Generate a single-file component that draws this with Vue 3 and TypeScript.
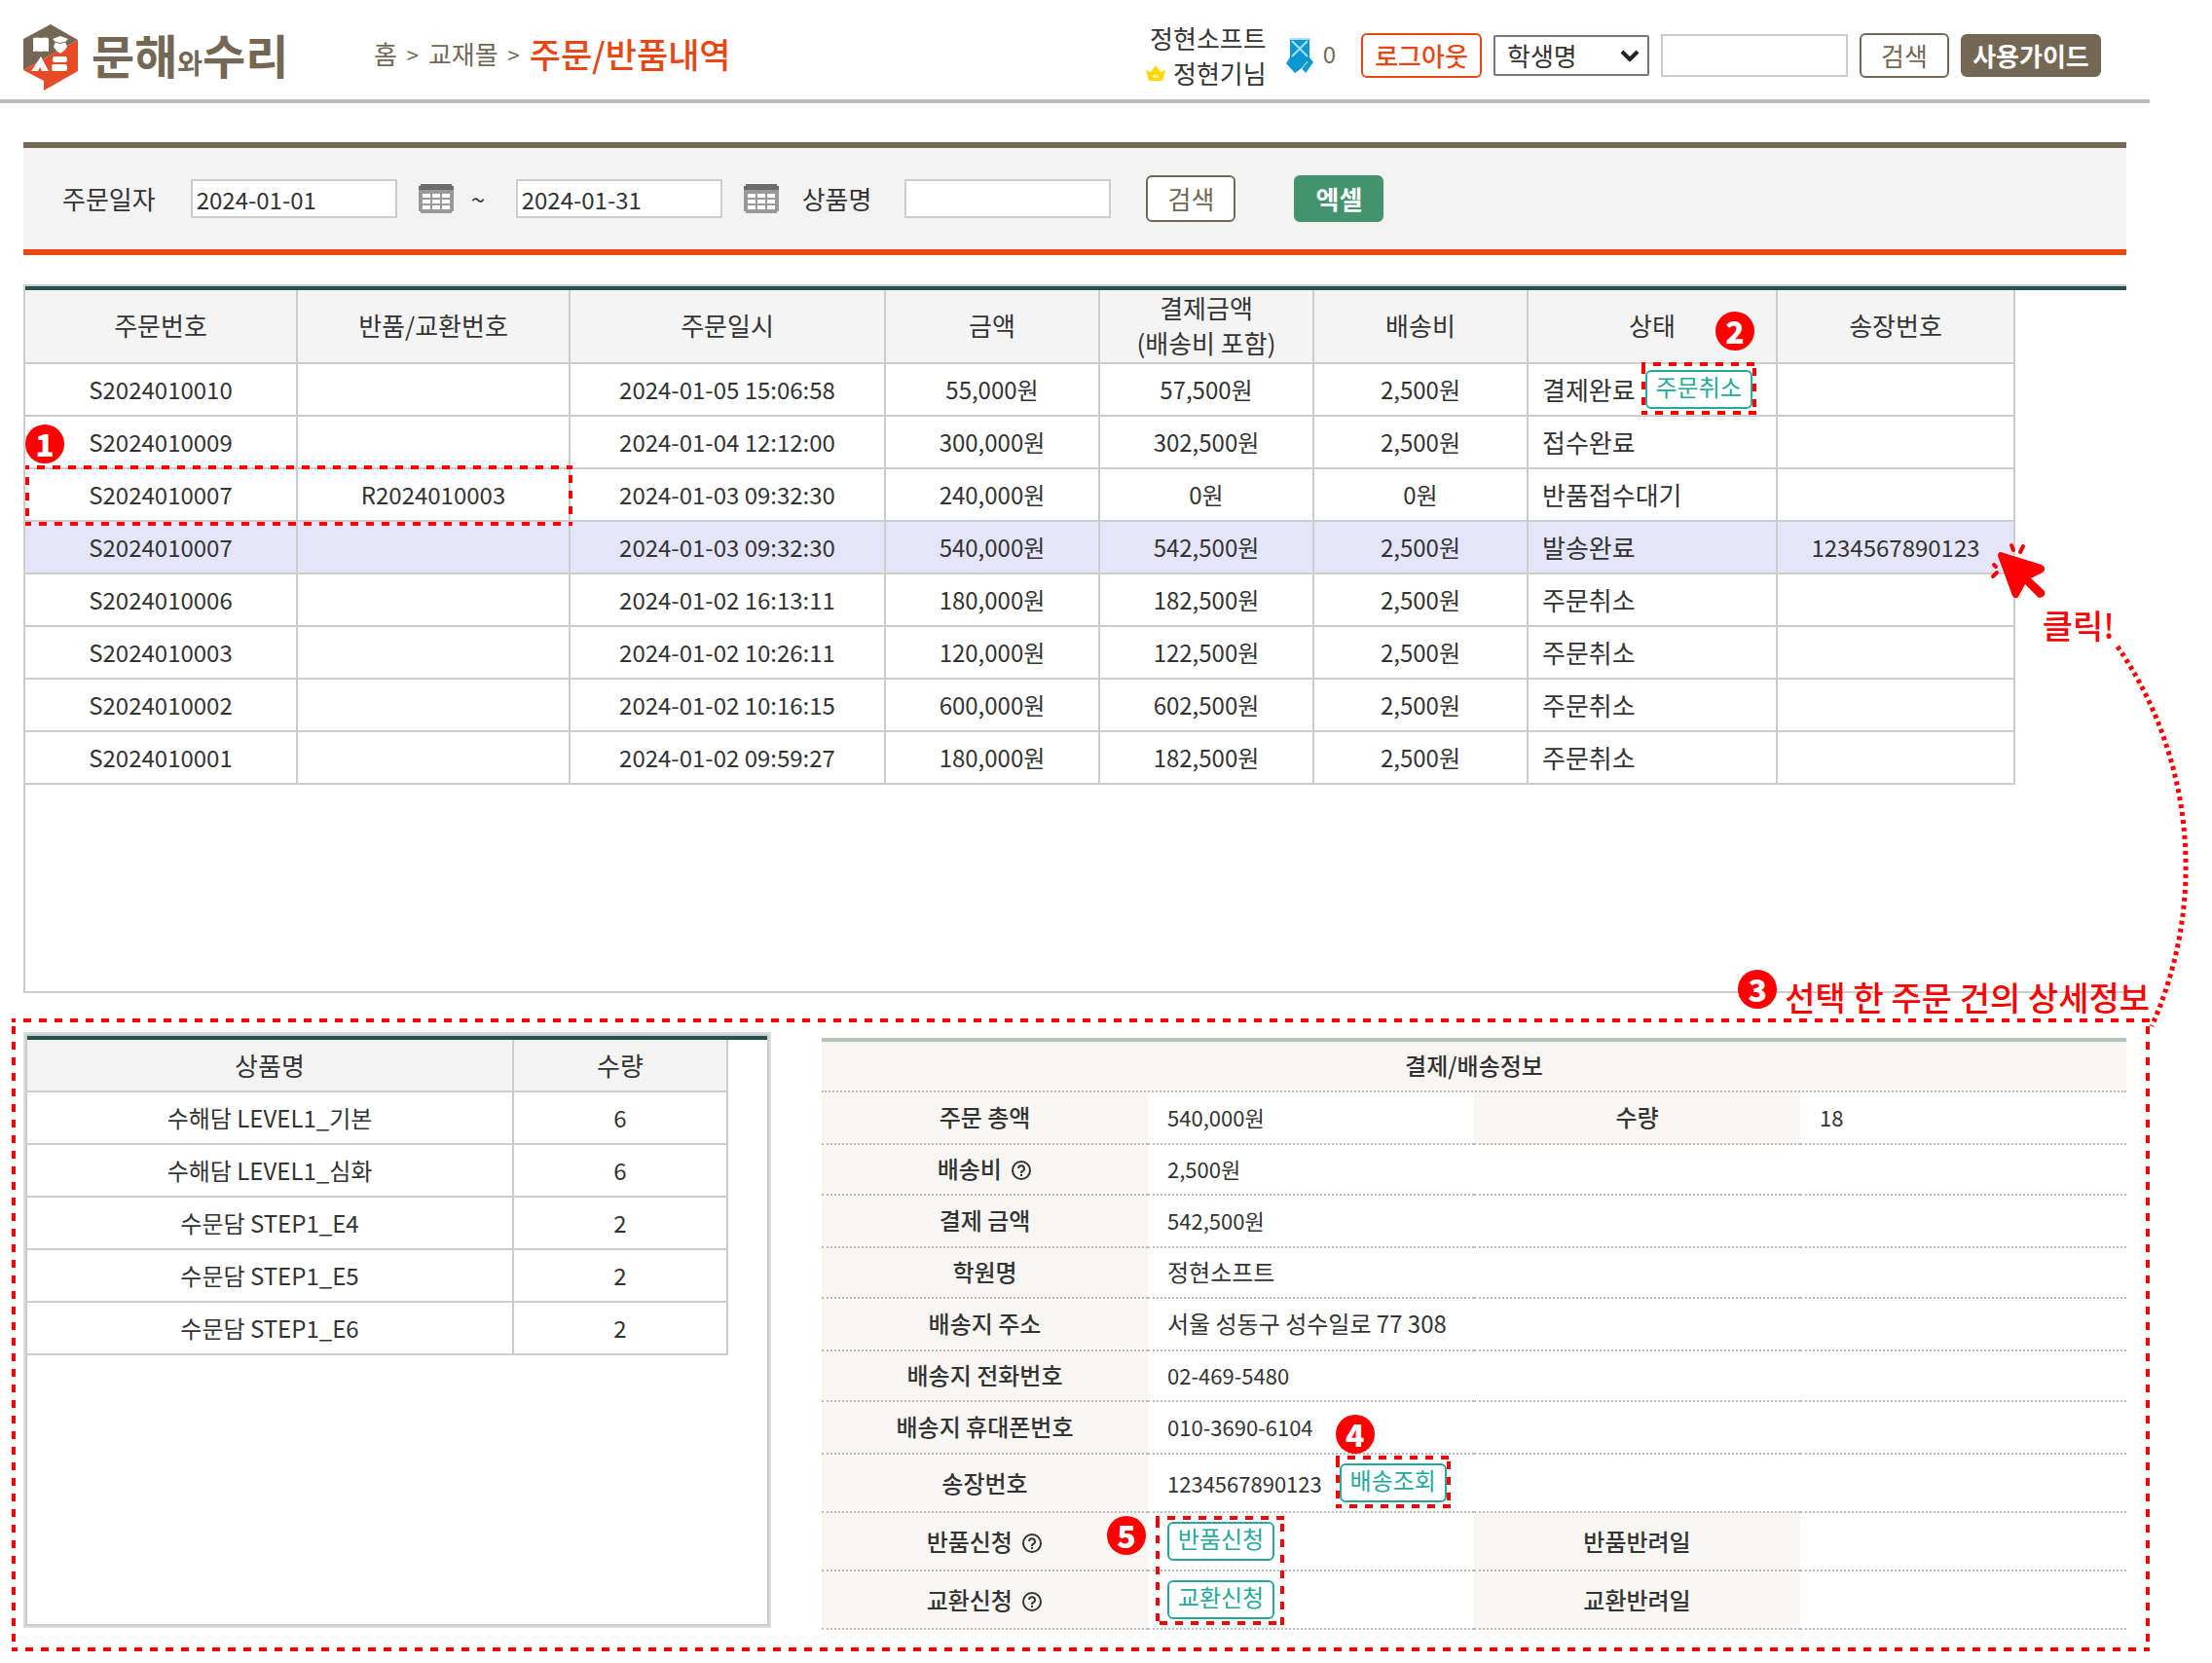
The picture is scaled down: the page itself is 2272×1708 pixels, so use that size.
<script setup lang="ts">
import { ref } from 'vue'

interface Order {
  id: string
  returnId?: string
  date: string
  amount: string
  paid: string
  shipping: string
  status: string
  cancellable?: boolean
  invoice?: string
  selected?: boolean
  marked?: boolean
}

interface Product {
  name: string
  count: number
}

interface InfoRow {
  label: string
  value: string
  numeric?: boolean
  help?: boolean
}

const startDate = ref('2024-01-01')
const endDate = ref('2024-01-31')
const productName = ref('')
const keyword = ref('')

const orders: Order[] = [
  { id: 'S2024010010', date: '2024-01-05 15:06:58', amount: '55,000원', paid: '57,500원', shipping: '2,500원', status: '결제완료', cancellable: true },
  { id: 'S2024010009', date: '2024-01-04 12:12:00', amount: '300,000원', paid: '302,500원', shipping: '2,500원', status: '접수완료' },
  { id: 'S2024010007', returnId: 'R2024010003', date: '2024-01-03 09:32:30', amount: '240,000원', paid: '0원', shipping: '0원', status: '반품접수대기', marked: true },
  { id: 'S2024010007', date: '2024-01-03 09:32:30', amount: '540,000원', paid: '542,500원', shipping: '2,500원', status: '발송완료', invoice: '1234567890123', selected: true },
  { id: 'S2024010006', date: '2024-01-02 16:13:11', amount: '180,000원', paid: '182,500원', shipping: '2,500원', status: '주문취소' },
  { id: 'S2024010003', date: '2024-01-02 10:26:11', amount: '120,000원', paid: '122,500원', shipping: '2,500원', status: '주문취소' },
  { id: 'S2024010002', date: '2024-01-02 10:16:15', amount: '600,000원', paid: '602,500원', shipping: '2,500원', status: '주문취소' },
  { id: 'S2024010001', date: '2024-01-02 09:59:27', amount: '180,000원', paid: '182,500원', shipping: '2,500원', status: '주문취소' },
]

const products: Product[] = [
  { name: '수해담 LEVEL1_기본', count: 6 },
  { name: '수해담 LEVEL1_심화', count: 6 },
  { name: '수문담 STEP1_E4', count: 2 },
  { name: '수문담 STEP1_E5', count: 2 },
  { name: '수문담 STEP1_E6', count: 2 },
]

const infoRows: InfoRow[] = [
  { label: '배송비', value: '2,500원', numeric: true, help: true },
  { label: '결제 금액', value: '542,500원', numeric: true },
  { label: '학원명', value: '정현소프트' },
  { label: '배송지 주소', value: '서울 성동구 성수일로 77 308' },
  { label: '배송지 전화번호', value: '02-469-5480', numeric: true },
  { label: '배송지 휴대폰번호', value: '010-3690-6104', numeric: true },
]
</script>

<template>
  <div class="page">
    <header class="header">
      <a class="logo" href="#">
        <svg class="logo-mark" width="56" height="68" viewBox="0 0 56 68" aria-hidden="true">
          <path d="M28 0 56 16 0 47V15Z" fill="#746855" />
          <path d="M56 16V48L21 68V58L0 47Z" fill="#e84a25" />
          <path d="M10 14q4-1 8 0 4-1 8 0v14q-4-1-8 0-4-1-8 0Z" fill="#fff" />
          <path d="M30 15 38 12 46 15 43 18 45 23 42 27 38 30 34 27 31 23 33 18Z" fill="#fff" />
          <path d="M33 18q5 3 10 0" fill="none" stroke="#746855" />
          <path d="M18 33 26 48H19L17 44 15 48H8Z" fill="#fff" />
          <path d="M31 33h13q2 3 0 6H31q-2-3 0-6ZM30 41h14q2 4 0 7H30q-2-4 0-7Z" fill="#fff" />
        </svg>
        <span class="logo-text">문해<small>와</small>수리</span>
      </a>
      <nav class="crumbs" aria-label="breadcrumb">
        <a href="#">홈</a><span class="sep">&gt;</span><a href="#">교재몰</a><span class="sep">&gt;</span><strong>주문/반품내역</strong>
      </nav>
      <div class="account">
        <div class="user">
          <span>정현소프트</span>
          <span class="user-name">
            <svg width="20" height="16" viewBox="0 0 20 16" aria-hidden="true">
              <path d="M0 5 5 7 10 0 15 7 20 5 17 16H3Z" fill="#ffd800" />
              <path d="M7 10h6v3H7Z" fill="#fff08a" />
            </svg>
            정현기님
          </span>
        </div>
        <div class="medal">
          <svg width="28" height="36" viewBox="0 0 28 36" aria-hidden="true">
            <path d="M4 0H24V20L28 25 20 36 16 31 9 36 0 26 4 20Z" fill="#0a98d0" />
            <path d="M6 3 22 19M22 3 6 19M4 1H24" fill="none" stroke="#a5e1f7" stroke-width="2" />
            <path d="M22 24 14 34" fill="none" stroke="#fff" stroke-width="1" />
          </svg>
          <span>0</span>
        </div>
        <div class="tools">
          <button type="button" class="btn btn-logout">로그아웃</button>
          <div class="select">
            <select aria-label="검색 항목"><option>학생명</option></select>
            <svg width="20" height="14" viewBox="0 0 20 14" aria-hidden="true">
              <path d="M2 3 10 11 18 3" fill="none" stroke="#222" stroke-width="4" />
            </svg>
          </div>
          <input v-model="keyword" class="keyword" type="text" aria-label="검색어" />
          <button type="button" class="btn">검색</button>
          <button type="button" class="btn btn-guide">사용가이드</button>
        </div>
      </div>
    </header>

    <form class="filter" @submit.prevent>
      <label for="start-date">주문일자</label>
      <input id="start-date" v-model="startDate" type="text" />
      <button type="button" class="calendar" aria-label="시작일 선택">
        <svg width="36" height="30" viewBox="0 0 36 30" aria-hidden="true">
          <path d="M2 0H34V2H36V28H34V30H2V28H0V2H2Z" fill="#999" />
          <path d="M2 0H34V2H36V6H0V2H2Z" fill="#6c6c6c" />
          <path d="M4 10h8v4H4Zm10 0h8v4h-8Zm10 0h8v4h-8ZM4 16h8v4H4Zm10 0h8v4h-8Zm10 0h8v4h-8ZM4 22h8v4H4Zm10 0h8v4h-8Zm10 0h8v4h-8Z" fill="#fff" />
        </svg>
      </button>
      <span class="tilde">~</span>
      <input v-model="endDate" type="text" aria-label="종료일" />
      <button type="button" class="calendar" aria-label="종료일 선택">
        <svg width="36" height="30" viewBox="0 0 36 30" aria-hidden="true">
          <path d="M2 0H34V2H36V28H34V30H2V28H0V2H2Z" fill="#999" />
          <path d="M2 0H34V2H36V6H0V2H2Z" fill="#6c6c6c" />
          <path d="M4 10h8v4H4Zm10 0h8v4h-8Zm10 0h8v4h-8ZM4 16h8v4H4Zm10 0h8v4h-8Zm10 0h8v4h-8ZM4 22h8v4H4Zm10 0h8v4h-8Zm10 0h8v4h-8Z" fill="#fff" />
        </svg>
      </button>
      <label for="product-name" class="label-product">상품명</label>
      <input id="product-name" v-model="productName" type="text" />
      <button type="submit" class="btn btn-search">검색</button>
      <button type="button" class="btn btn-excel">엑셀</button>
    </form>

    <section class="orders">
      <table class="grid">
        <colgroup>
          <col class="w-id" /><col class="w-id" /><col class="w-date" /><col class="w-money" /><col class="w-money" /><col class="w-money" /><col class="w-status" /><col />
        </colgroup>
        <thead>
          <tr>
            <th>주문번호</th>
            <th>반품/교환번호</th>
            <th>주문일시</th>
            <th>금액</th>
            <th>결제금액<br />(배송비 포함)</th>
            <th>배송비</th>
            <th class="anchor">상태<span class="badge badge-2">2</span></th>
            <th>송장번호</th>
          </tr>
        </thead>
        <tbody>
          <tr v-for="(order, index) in orders" :key="index" :class="{ selected: order.selected }">
            <td class="anchor">
              {{ order.id }}
              <template v-if="order.marked">
                <span class="badge badge-1">1</span>
                <svg class="mark mark-row" aria-hidden="true"><rect width="100%" height="100%" /></svg>
              </template>
            </td>
            <td>{{ order.returnId }}</td>
            <td>{{ order.date }}</td>
            <td>{{ order.amount }}</td>
            <td>{{ order.paid }}</td>
            <td>{{ order.shipping }}</td>
            <td class="status">
              <div class="with-action">
                <span>{{ order.status }}</span>
                <span v-if="order.cancellable" class="action">
                  <button type="button" class="btn-mini">주문취소</button>
                  <svg class="mark mark-button" aria-hidden="true"><rect width="100%" height="100%" /></svg>
                </span>
              </div>
            </td>
            <td>{{ order.invoice }}</td>
          </tr>
        </tbody>
      </table>
    </section>

    <section class="detail">
      <svg class="mark mark-detail" aria-hidden="true"><rect width="100%" height="100%" /></svg>
      <h2 class="caption"><span class="badge">3</span>선택 한 주문 건의 상세정보</h2>
      <p class="click">클릭!</p>
      <svg class="pointer" width="220" height="520" viewBox="2040 550 220 520" aria-hidden="true">
        <path d="M2175 664A400 400 0 0 1 2210 1054" fill="none" stroke="#f00" stroke-width="5" stroke-dasharray="4 4" />
        <path d="M2055 567 2097 580Q2103 584 2098 588L2086 594 2100 607Q2102 613 2094 614L2080 600 2073 613Q2070 616 2067 612L2052 571Q2052 567 2055 567Z" fill="#f00" />
        <path d="M2066 560 2068 565M2078 561 2075 567M2048 580 2050 582M2047 592 2051 588" fill="none" stroke="#f00" stroke-width="4" stroke-linecap="round" />
      </svg>

      <div class="products">
        <table class="grid">
          <colgroup><col /><col class="w-money" /></colgroup>
          <thead>
            <tr><th>상품명</th><th>수량</th></tr>
          </thead>
          <tbody>
            <tr v-for="product in products" :key="product.name">
              <td>{{ product.name }}</td>
              <td>{{ product.count }}</td>
            </tr>
          </tbody>
        </table>
      </div>

      <table class="info">
        <thead>
          <tr><th colspan="4">결제/배송정보</th></tr>
        </thead>
        <tbody>
          <tr>
            <th>주문 총액</th>
            <td class="num">540,000원</td>
            <th>수량</th>
            <td class="num">18</td>
          </tr>
          <tr v-for="row in infoRows" :key="row.label">
            <th>
              {{ row.label }}
              <svg v-if="row.help" class="help" width="22" height="22" viewBox="0 0 22 22" aria-hidden="true">
                <circle cx="11" cy="11" r="9" fill="none" stroke="#333" stroke-width="2" />
                <path d="M8 9a3 3 0 1 1 4 3q-1 0-1 2M11 15v2" fill="none" stroke="#333" stroke-width="2" />
              </svg>
            </th>
            <td :class="{ num: row.numeric }">{{ row.value }}</td>
            <td></td>
            <td></td>
          </tr>
          <tr class="tall">
            <th>송장번호</th>
            <td class="num">
              <div class="with-action">
                <span>1234567890123</span>
                <span class="action action-track">
                  <button type="button" class="btn-mini">배송조회</button>
                  <svg class="mark mark-button" aria-hidden="true"><rect width="100%" height="100%" /></svg>
                  <span class="badge badge-4">4</span>
                </span>
              </div>
            </td>
            <td></td>
            <td></td>
          </tr>
          <tr class="tall">
            <th>
              반품신청
              <svg class="help" width="22" height="22" viewBox="0 0 22 22" aria-hidden="true">
                <circle cx="11" cy="11" r="9" fill="none" stroke="#333" stroke-width="2" />
                <path d="M8 9a3 3 0 1 1 4 3q-1 0-1 2M11 15v2" fill="none" stroke="#333" stroke-width="2" />
              </svg>
            </th>
            <td>
              <div class="with-action">
                <span class="action">
                  <button type="button" class="btn-mini">반품신청</button>
                  <svg class="mark mark-pair" aria-hidden="true"><rect width="100%" height="100%" /></svg>
                  <span class="badge badge-5">5</span>
                </span>
              </div>
            </td>
            <th>반품반려일</th>
            <td></td>
          </tr>
          <tr class="tall">
            <th>
              교환신청
              <svg class="help" width="22" height="22" viewBox="0 0 22 22" aria-hidden="true">
                <circle cx="11" cy="11" r="9" fill="none" stroke="#333" stroke-width="2" />
                <path d="M8 9a3 3 0 1 1 4 3q-1 0-1 2M11 15v2" fill="none" stroke="#333" stroke-width="2" />
              </svg>
            </th>
            <td>
              <div class="with-action">
                <button type="button" class="btn-mini">교환신청</button>
              </div>
            </td>
            <th>교환반려일</th>
            <td></td>
          </tr>
        </tbody>
      </table>
    </section>
  </div>
</template>

<style>
body {
  margin: 0;
  background: #fff;
}
</style>

<style scoped>
.page {
  font-family: 'Noto Sans CJK KR', 'Noto Sans', sans-serif;
  font-size: 26px;
  line-height: 36px;
  color: #333;
  overflow: hidden;
}

.page *,
.page *::before {
  box-sizing: border-box;
}

button,
input,
select {
  font: inherit;
  color: inherit;
  margin: 0;
}

input {
  width: 212px;
  height: 40px;
  padding: 0 4px;
  border: 2px solid #ccc;
  border-radius: 0;
  background: #fff;
  font-size: 24px;
}

.btn {
  height: 48px;
  width: 92px;
  padding: 0;
  border: 2px solid #746855;
  border-radius: 6px;
  background: #fff;
  color: #746855;
  white-space: nowrap;
}

/* header */
.header {
  display: flex;
  align-items: center;
  height: 106px;
  margin-right: 64px;
  padding: 12px 50px 0 24px;
  border-bottom: 4px solid #bbb;
}

.logo {
  display: flex;
  align-items: center;
  gap: 14px;
  width: 360px;
  padding-top: 4px;
  color: #746855;
  text-decoration: none;
}

.logo-text {
  font-size: 48px;
  line-height: 56px;
  font-weight: 700;
  white-space: nowrap;
}

.logo-text small {
  font-size: 28px;
}

.crumbs {
  display: flex;
  align-items: center;
  padding-bottom: 4px;
  color: #746855;
  white-space: nowrap;
}

.crumbs a {
  color: inherit;
  text-decoration: none;
}

.crumbs .sep {
  width: 32px;
  font-size: 22px;
  text-align: center;
}

.crumbs strong {
  font-size: 35px;
  font-weight: 500;
  color: #e94611;
}

.account {
  display: flex;
  align-items: center;
  margin-left: auto;
}

.user {
  display: flex;
  flex-direction: column;
  align-items: flex-end;
  margin-right: 20px;
  white-space: nowrap;
}

.user-name {
  display: flex;
  align-items: center;
  gap: 8px;
}

.medal {
  display: flex;
  align-items: center;
  gap: 10px;
  margin-right: 26px;
  font-size: 24px;
  color: #746855;
}

.medal span {
  padding-bottom: 4px;
}

.tools {
  display: flex;
  align-items: center;
  gap: 12px;
}

.tools .btn {
  height: 46px;
}

.tools .btn-logout {
  width: 124px;
  border-color: #e94611;
  color: #e94611;
  font-weight: 500;
}

.tools .btn-guide {
  width: 144px;
  height: 44px;
  background: #746855;
  color: #fff;
  font-weight: 700;
}

.select {
  position: relative;
}

.select select {
  display: block;
  width: 160px;
  height: 42px;
  padding: 0 12px;
  border: 2px solid #767676;
  border-radius: 2px;
  background: #fff;
  appearance: none;
}

.select svg {
  position: absolute;
  right: 10px;
  top: 14px;
  pointer-events: none;
}

.keyword {
  width: 192px;
  height: 44px;
}

/* filter bar */
.filter {
  display: flex;
  align-items: center;
  height: 116px;
  margin: 40px 88px 30px 24px;
  padding-left: 40px;
  border-top: 6px solid #746855;
  border-bottom: 6px solid #e94611;
  background: #f3f3f3;
  white-space: nowrap;
}

.filter label {
  margin-right: 36px;
}

.filter .label-product {
  margin: 0 34px 0 24px;
}

.calendar {
  display: flex;
  margin-left: 22px;
  padding: 0;
  border: 0;
  background: none;
}

.tilde {
  width: 64px;
  padding-left: 18px;
}

.btn-search {
  margin: 0 60px 0 36px;
}

.btn-excel {
  border-color: #43946e;
  background: #43946e;
  color: #fff;
  font-weight: 700;
}

/* bordered grids */
.grid {
  border-collapse: separate;
  border-spacing: 0;
  table-layout: fixed;
}

.grid th,
.grid td {
  padding: 0;
  border-right: 2px solid #ccc;
  border-bottom: 2px solid #ccc;
  text-align: center;
  white-space: nowrap;
}

.grid th {
  height: 54px;
  background: #f4f4f4;
  font-weight: 400;
}

.grid td {
  height: 54px;
  font-size: 24px;
}

.w-id {
  width: 280px;
}

.w-date {
  width: 324px;
}

.w-money {
  width: 220px;
}

.w-status {
  width: 256px;
}

.orders {
  min-height: 728px;
  margin: 0 88px 0 24px;
  border: 2px solid #ccc;
  border-right: 0;
}

.orders::before,
.products::before {
  content: '';
  display: block;
  height: 4px;
  background: #24504d;
}

.orders .grid {
  width: calc(100% - 114px);
}

.orders th {
  height: 76px;
  padding-bottom: 2px;
}

.selected td {
  background: #e5e5f9;
}

.grid .status {
  padding-left: 14px;
  font-size: 26px;
  text-align: left;
}

.anchor {
  position: relative;
}

.with-action {
  display: flex;
  align-items: center;
  gap: 10px;
}

.action {
  position: relative;
  display: flex;
}

.action-track {
  margin-left: 8px;
}

.btn-mini {
  width: 110px;
  height: 40px;
  padding: 0 0 6px;
  border: 2px solid #24a99c;
  border-radius: 6px;
  background: #fff;
  color: #24a99c;
  font-size: 24px;
  line-height: 30px;
  white-space: nowrap;
}

/* guide marks */
.badge {
  display: flex;
  align-items: center;
  justify-content: center;
  width: 40px;
  height: 40px;
  padding-bottom: 2px;
  border-radius: 50%;
  background: #f00;
  color: #fff;
  font-size: 32px;
  line-height: 38px;
  font-weight: 900;
}

.mark {
  position: absolute;
  z-index: 1;
  overflow: hidden;
  pointer-events: none;
}

/* half of the stroke is clipped by the svg edge, leaving a 4px line */
.mark rect {
  fill: none;
  stroke: #f00;
  stroke-width: 8px;
  stroke-dasharray: 8 8;
  stroke-dashoffset: 4px;
}

.badge-1,
.badge-2,
.badge-4,
.badge-5 {
  position: absolute;
  z-index: 1;
}

.badge-1 {
  left: 0;
  top: -46px;
}

.badge-2 {
  right: 22px;
  top: 22px;
}

.badge-4 {
  left: -4px;
  top: -50px;
}

.badge-5 {
  left: -62px;
  top: -6px;
}

.mark-row {
  left: 0;
  top: -4px;
  width: 562px;
  height: 62px;
}

.mark-button {
  left: -4px;
  top: -8px;
  width: 118px;
  height: 54px;
}

.mark-pair {
  left: -12px;
  top: -6px;
  width: 132px;
  height: 112px;
}

.mark-detail {
  left: 0;
  top: 0;
  width: 100%;
  height: 100%;
}

/* detail area */
.detail {
  position: relative;
  display: flex;
  align-items: flex-start;
  justify-content: space-between;
  gap: 52px;
  margin: 26px 64px 0 12px;
  padding: 14px 24px 22px 12px;
}

.caption {
  position: absolute;
  right: 0;
  top: -50px;
  display: flex;
  gap: 8px;
  margin: 0;
  color: #f00;
  font-size: 34px;
  line-height: 56px;
  font-weight: 500;
  white-space: nowrap;
}

.click {
  position: absolute;
  right: 36px;
  top: -432px;
  margin: 0;
  color: #f00;
  font-size: 34px;
  line-height: 56px;
  font-weight: 500;
}

.pointer {
  position: absolute;
  right: -52px;
  top: -496px;
}

.products {
  flex: 0 0 768px;
  height: 612px;
  border: 2px solid #ddd;
  outline: 2px solid #ccc;
  outline-offset: -4px;
  padding: 2px;
}

.products .grid {
  width: calc(100% - 40px);
}

.info {
  flex: 1;
  margin-top: 6px;
  border-collapse: separate;
  border-spacing: 0;
  border-top: 4px solid #aec6bb;
  table-layout: fixed;
  font-size: 24px;
  line-height: 32px;
}

.info th,
.info td {
  width: 25%;
  height: 54px;
  padding: 0 0 2px;
  border-bottom: 2px dotted #bbb;
  white-space: nowrap;
}

.info thead th,
.info tr:nth-child(2n) th,
.info tr:nth-child(2n) td {
  height: 52px;
}

.info tr.tall th,
.info tr.tall td {
  height: 60px;
  padding-bottom: 0;
}

.info th {
  background: #f7f6f2;
  font-weight: 500;
  text-align: center;
}

.info td {
  padding-left: 20px;
  text-align: left;
}

.info .num {
  font-size: 22px;
}

.help {
  margin-left: 4px;
  vertical-align: -3px;
}
</style>
